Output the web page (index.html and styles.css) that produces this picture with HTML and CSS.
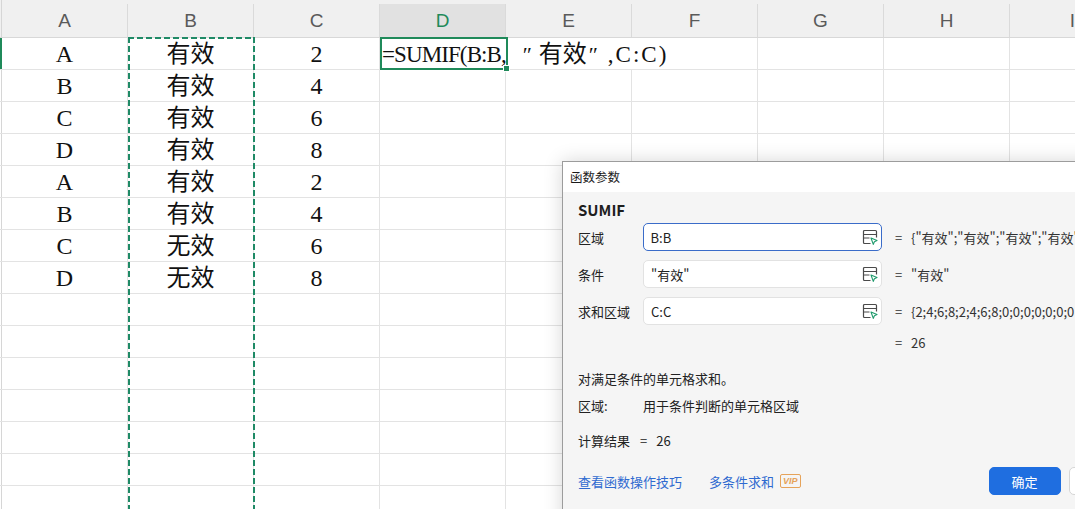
FILE: index.html
```html
<!DOCTYPE html>
<html lang="zh-CN">
<head>
<meta charset="utf-8">
<title>SUMIF</title>
<link rel="stylesheet" href="styles.css">
</head>
<body>
<div class="sheet">
  <div class="hdr">
    <div class="rh"></div>
    <div class="hc">A</div><div class="hc">B</div><div class="hc">C</div><div class="hc act">D</div><div class="hc">E</div><div class="hc">F</div><div class="hc">G</div><div class="hc">H</div><div class="hc">I</div>
  </div>
  <div class="row">
    <div class="rh sel"></div>
    <div class="c">A</div><div class="c">有效</div><div class="c">2</div>
    <div class="c ov"><span class="lat">=SUMIF(B:B,</span><span class="q open">″</span>有效<span class="q close">″</span><span class="lat tail">,C:C)</span><span class="selbox"><span class="handle"></span></span></div>
    <div class="c"></div><div class="c"></div><div class="c"></div>
  </div>
  <div class="row"><div class="rh"></div><div class="c">B</div><div class="c">有效</div><div class="c">4</div><div class="c"></div><div class="c"></div><div class="c"></div><div class="c"></div><div class="c"></div><div class="c"></div></div>
  <div class="row"><div class="rh"></div><div class="c">C</div><div class="c">有效</div><div class="c">6</div><div class="c"></div><div class="c"></div><div class="c"></div><div class="c"></div><div class="c"></div><div class="c"></div></div>
  <div class="row"><div class="rh"></div><div class="c">D</div><div class="c">有效</div><div class="c">8</div><div class="c"></div><div class="c"></div><div class="c"></div><div class="c"></div><div class="c"></div><div class="c"></div></div>
  <div class="row"><div class="rh"></div><div class="c">A</div><div class="c">有效</div><div class="c">2</div><div class="c"></div><div class="c"></div><div class="c"></div><div class="c"></div><div class="c"></div><div class="c"></div></div>
  <div class="row"><div class="rh"></div><div class="c">B</div><div class="c">有效</div><div class="c">4</div><div class="c"></div><div class="c"></div><div class="c"></div><div class="c"></div><div class="c"></div><div class="c"></div></div>
  <div class="row"><div class="rh"></div><div class="c">C</div><div class="c">无效</div><div class="c">6</div><div class="c"></div><div class="c"></div><div class="c"></div><div class="c"></div><div class="c"></div><div class="c"></div></div>
  <div class="row"><div class="rh"></div><div class="c">D</div><div class="c">无效</div><div class="c">8</div><div class="c"></div><div class="c"></div><div class="c"></div><div class="c"></div><div class="c"></div><div class="c"></div></div>
  <div class="row"><div class="rh"></div><div class="c"></div><div class="c"></div><div class="c"></div><div class="c"></div><div class="c"></div><div class="c"></div><div class="c"></div><div class="c"></div><div class="c"></div></div>
  <div class="row"><div class="rh"></div><div class="c"></div><div class="c"></div><div class="c"></div><div class="c"></div><div class="c"></div><div class="c"></div><div class="c"></div><div class="c"></div><div class="c"></div></div>
  <div class="row"><div class="rh"></div><div class="c"></div><div class="c"></div><div class="c"></div><div class="c"></div><div class="c"></div><div class="c"></div><div class="c"></div><div class="c"></div><div class="c"></div></div>
  <div class="row"><div class="rh"></div><div class="c"></div><div class="c"></div><div class="c"></div><div class="c"></div><div class="c"></div><div class="c"></div><div class="c"></div><div class="c"></div><div class="c"></div></div>
  <div class="row"><div class="rh"></div><div class="c"></div><div class="c"></div><div class="c"></div><div class="c"></div><div class="c"></div><div class="c"></div><div class="c"></div><div class="c"></div><div class="c"></div></div>
  <div class="row"><div class="rh"></div><div class="c"></div><div class="c"></div><div class="c"></div><div class="c"></div><div class="c"></div><div class="c"></div><div class="c"></div><div class="c"></div><div class="c"></div></div>
  <div class="row"><div class="rh"></div><div class="c"></div><div class="c"></div><div class="c"></div><div class="c"></div><div class="c"></div><div class="c"></div><div class="c"></div><div class="c"></div><div class="c"></div></div>
  <div class="marquee"></div>
</div>

<div class="dlg">
  <div class="dlg-title">函数参数</div>
  <div class="dlg-body">
    <div class="fname">SUMIF</div>
    <div class="prow">
      <div class="plabel">区域</div>
      <div class="pinput focus"><span class="ptext">B:B</span>
        <svg class="pick" width="16" height="16" viewBox="0 0 16 16"><path d="M8.5 14.5H2.5a1 1 0 0 1-1-1v-11a1 1 0 0 1 1-1h11a1 1 0 0 1 1 1V8.5" fill="none" stroke="#4a4a4a" stroke-width="1.2"/><path d="M1.5 5.5h13M1.5 9h6" fill="none" stroke="#4a4a4a" stroke-width="1.2"/><path d="M9 9l6 2.6-2.6 1.1-1.1 2.7z" fill="none" stroke="#1f9a6c" stroke-width="1.1" stroke-linejoin="round"/></svg>
      </div>
      <div class="eq">=</div>
      <div class="pval">{"有效";"有效";"有效";"有效"</div>
    </div>
    <div class="prow">
      <div class="plabel">条件</div>
      <div class="pinput"><span class="ptext">"有效"</span>
        <svg class="pick" width="16" height="16" viewBox="0 0 16 16"><path d="M8.5 14.5H2.5a1 1 0 0 1-1-1v-11a1 1 0 0 1 1-1h11a1 1 0 0 1 1 1V8.5" fill="none" stroke="#4a4a4a" stroke-width="1.2"/><path d="M1.5 5.5h13M1.5 9h6" fill="none" stroke="#4a4a4a" stroke-width="1.2"/><path d="M9 9l6 2.6-2.6 1.1-1.1 2.7z" fill="none" stroke="#1f9a6c" stroke-width="1.1" stroke-linejoin="round"/></svg>
      </div>
      <div class="eq">=</div>
      <div class="pval">"有效"</div>
    </div>
    <div class="prow">
      <div class="plabel">求和区域</div>
      <div class="pinput"><span class="ptext">C:C</span>
        <svg class="pick" width="16" height="16" viewBox="0 0 16 16"><path d="M8.5 14.5H2.5a1 1 0 0 1-1-1v-11a1 1 0 0 1 1-1h11a1 1 0 0 1 1 1V8.5" fill="none" stroke="#4a4a4a" stroke-width="1.2"/><path d="M1.5 5.5h13M1.5 9h6" fill="none" stroke="#4a4a4a" stroke-width="1.2"/><path d="M9 9l6 2.6-2.6 1.1-1.1 2.7z" fill="none" stroke="#1f9a6c" stroke-width="1.1" stroke-linejoin="round"/></svg>
      </div>
      <div class="eq">=</div>
      <div class="pval">{2;4;6;8;2;4;6;8;0;0;0;0;0;0;0</div>
    </div>
    <div class="result"><span class="eq">=</span><span class="pval">26</span></div>
    <div class="desc">对满足条件的单元格求和。</div>
    <div class="argdesc"><span class="plabel">区域:</span><span>用于条件判断的单元格区域</span></div>
    <div class="calc">计算结果<span class="ceq">=</span>26</div>
    <div class="foot">
      <a class="link">查看函数操作技巧</a>
      <a class="link link2">多条件求和</a>
      <span class="vip">VIP</span>
      <button class="btn primary">确定</button>
      <button class="btn">取消</button>
    </div>
  </div>
</div>
</body>
</html>
```

FILE: styles.css
```css
html, body {
  margin: 0;
  padding: 0;
}
body {
  width: 1075px;
  height: 509px;
  overflow: hidden;
  position: relative;
  background: #ffffff;
}

/* ---------- sheet ---------- */
.sheet {
  position: relative;
  width: 1136px;
}
.hdr, .row {
  display: grid;
  grid-template-columns: 2px repeat(9, 126px);
}
.hdr {
  height: 38px;
  box-sizing: border-box;
  background: #f0f0f0;
  border-bottom: 1px solid #d8d8d8;
}
.hc {
  margin-top: 4px;
  border-right: 1px solid #dadada;
  display: flex;
  align-items: center;
  justify-content: center;
  font-family: "Liberation Sans", Arial, sans-serif;
  font-size: 19px;
  color: #5a5a5a;
}
.hc.act {
  background: #e1e1e1;
  color: #1f8a5a;
}
.row {
  height: 32px;
  box-sizing: border-box;
  border-bottom: 1px solid #e3e3e3;
}
.rh {
  border-right: 1px solid #d6d6d6;
}
.row .rh.sel {
  background: #1f8a5a;
  border-right-color: #1f8a5a;
}
.c {
  border-right: 1px solid #e3e3e3;
  font-family: "Liberation Serif", "Noto Sans CJK SC", serif;
  font-size: 24px;
  line-height: 29px;
  padding-top: 2px;
  text-align: center;
  color: #111;
}
.c.ov {
  grid-column: span 3;
  position: relative;
  text-align: left;
  padding-left: 2px;
  white-space: nowrap;
}
.ov .lat {
  font-size: 23px;
  letter-spacing: -0.9px;
}
.ov .lat.tail {
  letter-spacing: 2px;
}
.ov .q {
  display: inline-block;
  box-sizing: border-box;
  font-family: "Liberation Serif", "DejaVu Serif", serif;
  font-size: 22px;
}
.ov .q.open {
  width: 33px;
  padding-left: 17px;
  text-align: left;
}
.ov .q.close {
  width: 21px;
  padding-left: 2px;
  text-align: left;
}
.selbox {
  position: absolute;
  left: 0;
  top: -1px;
  width: 128px;
  height: 33px;
  box-sizing: border-box;
  border: 2px solid #1f8a5a;
}
.handle {
  position: absolute;
  right: -4px;
  bottom: -4px;
  width: 5px;
  height: 5px;
  background: #1f8a5a;
  border: 1px solid #ffffff;
}
.marquee {
  position: absolute;
  left: 128px;
  top: 37px;
  width: 127px;
  bottom: -20px;
  background-image:
    repeating-linear-gradient(to bottom, #1f8a66 0 6px, transparent 6px 9px),
    repeating-linear-gradient(to bottom, #1f8a66 0 6px, transparent 6px 9px),
    repeating-linear-gradient(to right, #1f8a66 0 6px, transparent 6px 9px);
  background-size: 2px 100%, 2px 100%, 100% 2px;
  background-position: left top, right top, left top;
  background-repeat: no-repeat;
}

/* ---------- dialog ---------- */
.dlg {
  position: absolute;
  left: 562px;
  top: 161px;
  width: 600px;
  height: 400px;
  border: 1px solid #9c9c9c;
  background: #f5f5f5;
  box-shadow: 0 0 18px rgba(0, 0, 0, 0.16);
  font-family: "Noto Sans CJK SC", "Noto Sans", sans-serif;
  font-size: 13px;
  color: #222;
  z-index: 2;
}
.dlg-title {
  height: 30px;
  line-height: 30px;
  padding-left: 7px;
  background: #ffffff;
  font-size: 12.5px;
  color: #1a1a1a;
}
.dlg-body {
  padding: 8px 0 0 15px;
}
.fname {
  height: 20px;
  line-height: 20px;
  font-size: 15px;
  font-weight: 700;
  color: #1e1e1e;
}
.prow {
  display: flex;
  align-items: center;
  height: 28px;
  margin-top: 9px;
  white-space: nowrap;
}
.fname + .prow {
  margin-top: 3px;
}
.plabel {
  display: inline-block;
  width: 65px;
  flex: none;
}
.pinput {
  width: 239px;
  height: 28px;
  box-sizing: border-box;
  flex: none;
  display: flex;
  align-items: center;
  justify-content: space-between;
  padding: 0 3px 0 7px;
  background: #ffffff;
  border: 1px solid #e2e2e2;
  border-radius: 5px;
  color: #222;
}
.pinput.focus {
  border: 1.5px solid #3a6cc9;
  padding-left: 6.5px;
}
.pick {
  flex: none;
}
.eq {
  display: inline-block;
  width: 29px;
  box-sizing: border-box;
  padding-left: 13px;
  flex: none;
  color: #333;
}
.pval {
  color: #333;
}
.result {
  margin-top: 8px;
  height: 20px;
  line-height: 20px;
  padding-left: 304px;
}
.desc {
  margin-top: 17px;
  line-height: 18px;
}
.argdesc {
  margin-top: 9px;
  line-height: 18px;
}
.calc {
  margin-top: 17px;
  line-height: 18px;
}
.ceq {
  margin: 0 9px 0 10px;
}
.foot {
  margin-top: 17px;
  height: 28px;
  display: flex;
  align-items: center;
  white-space: nowrap;
}
.link {
  color: #2f6ad0;
  cursor: pointer;
}
.link2 {
  margin-left: 27px;
}
.vip {
  margin-left: 6px;
  height: 12px;
  line-height: 12px;
  padding: 0 2px;
  border: 1px solid #e6a35a;
  border-radius: 2px;
  color: #e6a35a;
  font-family: "Liberation Sans", Arial, sans-serif;
  font-size: 9px;
  font-weight: 700;
  font-style: italic;
}
.btn {
  width: 72px;
  height: 28px;
  margin-left: 8px;
  border: 1px solid #d6d6d6;
  border-radius: 5px;
  background: #ffffff;
  font-family: "Noto Sans CJK SC", sans-serif;
  font-size: 13px;
  color: #222;
  padding: 0;
}
.btn.primary {
  margin-left: 188px;
  background: #1f6ee0;
  border-color: #1f6ee0;
  color: #ffffff;
}
```
